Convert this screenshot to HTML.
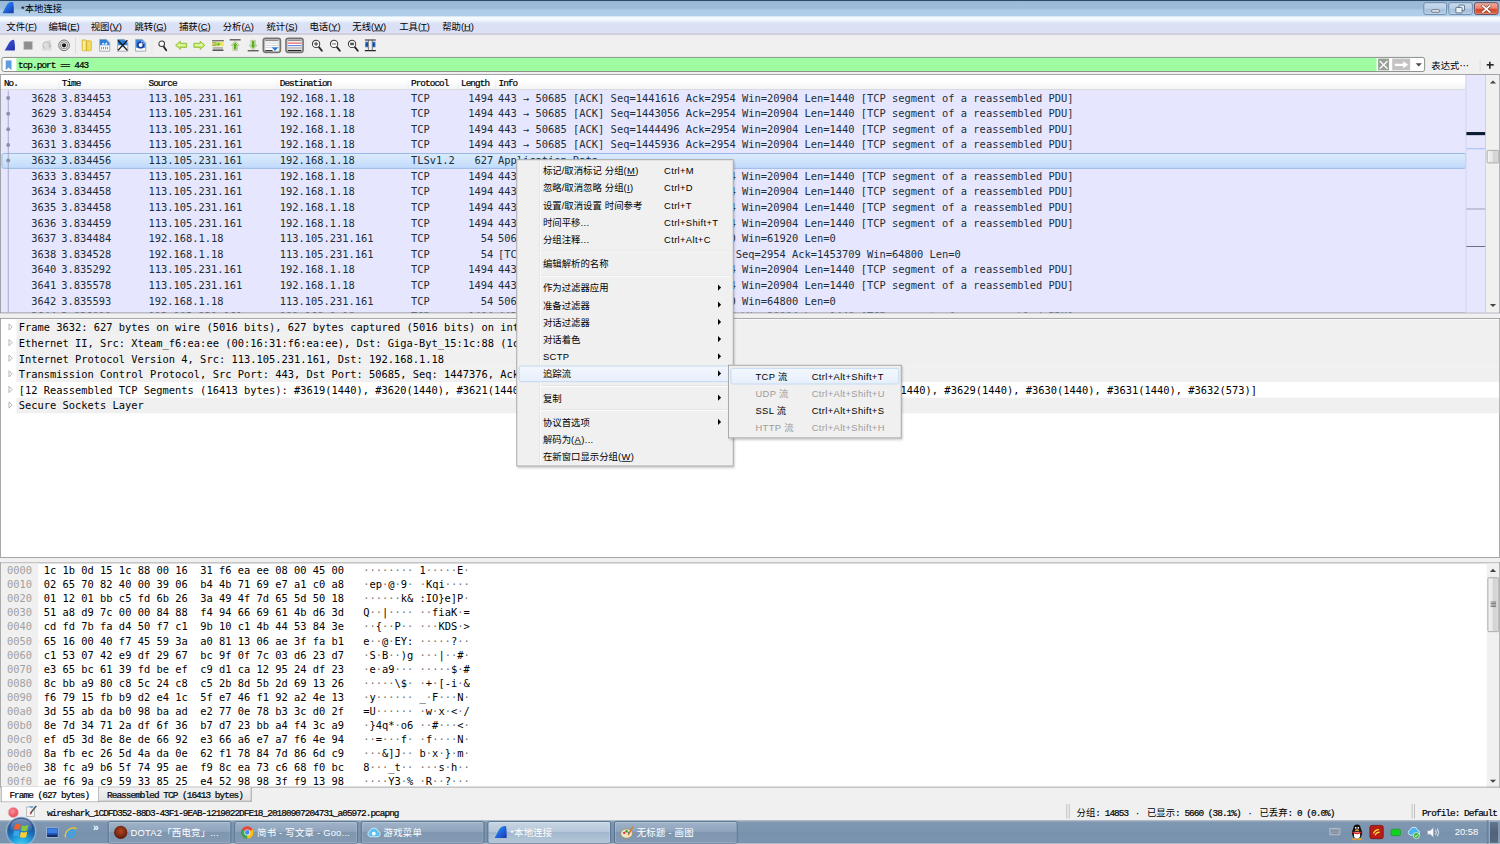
<!DOCTYPE html>
<html lang="zh-CN">
<head>
<meta charset="utf-8">
<title>*本地连接</title>
<style>
html,body{margin:0;padding:0;}
body{width:1500px;height:844px;overflow:hidden;background:#f0f0f0;position:relative;}
#s{position:absolute;left:0;top:0;width:1920px;height:1080px;transform:scale(0.78125);transform-origin:0 0;background:#f0f0f0;overflow:hidden;
 font-family:"Liberation Sans","Noto Sans CJK SC",sans-serif;font-size:12px;color:#000;}
#s *{box-sizing:border-box;}
.abs{position:absolute;}
.mono{font-family:"DejaVu Sans Mono","Liberation Mono",monospace;font-size:13.305px;white-space:pre;}
.sim{font-family:"Liberation Mono","Noto Serif CJK SC",monospace;font-size:12px;letter-spacing:-1.2px;white-space:pre;-webkit-text-stroke:0.25px #000;}
.simc{font-family:"Liberation Mono","Noto Sans CJK SC",sans-serif;font-size:12px;white-space:pre;}
/* title bar */
#title{left:0;top:0;width:1920px;height:22px;background:linear-gradient(#2a4866 0,#2e4e6e 1px,#98b7d6 1.6px,#9cbbd9 4px,#9cbbd9 10.5px,#aecce7 13px,#b0cee9 22px);}
#title .t{left:27px;top:3px;font-size:12px;line-height:17px;color:#000;}
.wb{top:2.5px;height:16px;border:1px solid #5f7c9c;border-radius:3px;background:linear-gradient(#c6d9ed,#bbd1e8 48%,#a6c0dc 52%,#b0c8e2 100%);box-shadow:inset 0 0 0 1px rgba(255,255,255,0.35);}
.cjk{font-family:"Noto Sans CJK SC","Liberation Sans",sans-serif;font-size:12px;white-space:pre;}
#menubar{left:0;top:21.2px;width:1920px;height:23.6px;background:linear-gradient(#f7fbff 0,#f3f8fe 4.5px,#dce2f5 8.5px,#dadff5 17px,#dfe2f6 21.6px,#c9c6d3 22px,#cbc8d4 23px,#e6e6ea 23.6px);}
#menubar span{position:absolute;top:5px;line-height:17px;font-size:12px;white-space:pre;}
#toolbar{left:0;top:44px;width:1920px;height:29px;}
.tsep{position:absolute;top:4px;width:1px;height:21px;background:#d6d6d6;}
.ic{position:absolute;width:16px;height:16px;top:7px;overflow:visible;}
.tog{position:absolute;top:3px;width:24px;height:23px;border:2px solid #747474;border-radius:4px;background:#d6d6d6;box-shadow:inset 0 0 0 1px #b4b4b4;}
/* filter */
#filter{left:2px;top:73px;width:1822px;height:19px;border:1px solid #6a766a;border-radius:3px;background:#fff;overflow:hidden;}
#filter .g{left:17.5px;top:0;width:1741.5px;height:17px;background:#a0fca0;}
/* panes */
.pane{position:absolute;left:0;width:1920px;border:1px solid #8f8f8f;background:#fff;overflow:hidden;}
#plist{top:95px;height:306px;background:#e7e6ff;}
#phead{left:0;top:0;width:1875px;height:19px;background:linear-gradient(#fff 0,#fff 40%,#f3f4f5 100%);border-bottom:1px solid #d5d5d5;}
#phead span{position:absolute;top:5px;line-height:13px;}
.row{position:absolute;left:0;width:1875px;height:20px;line-height:20px;color:#1a2f37;}
.row span{position:absolute;top:0;}
.c1{left:0;width:71px;text-align:right;}
.c2{left:77.5px;}.c3{left:189px;}.c4{left:357px;}.c5{left:525px;}
.c6{left:560px;width:70.5px;text-align:right;}.c7{left:636.5px;}
.sel{left:1px;width:1875px;border:1px solid #84acdd;border-radius:3px;background:linear-gradient(#dcebfc,#c1dbfc);}
#details{top:407px;height:307px;}
.drow{position:absolute;left:20px;width:1900px;height:20px;line-height:20px;background:#f0f0f0;color:#000;}
.drow span{position:absolute;left:3px;top:0.6px;}
.exp{position:absolute;left:7.7px;width:9px;height:9px;}
#hex{top:720px;height:288px;border-bottom:none;}
.hrow{position:absolute;left:0;height:18px;line-height:18px;width:1900px;margin-top:1px;}
.hrow .o{position:absolute;left:8px;color:#a0a0a0;}
.hrow .h{position:absolute;left:55.1px;color:#000;}
.hrow .a{position:absolute;left:464px;color:#000;}
.hrow .a b{font-weight:normal;color:#777;}
/* menus */
.menu{position:absolute;background:#f0f0f0;border:1px solid #979797;box-shadow:2px 2px 3px rgba(0,0,0,0.22);font-size:12px;}
.mi{position:absolute;left:0;height:22px;line-height:23.4px;white-space:pre;}
.mi .k{position:absolute;top:0;letter-spacing:0.45px;}
.mi i{font-style:normal;letter-spacing:0.45px;}
.msep{position:absolute;left:30px;height:2px;border-top:1px solid #e0e0e0;border-bottom:1px solid #fff;}
.marr{position:absolute;width:0;height:0;border-left:4px solid #000;border-top:4px solid transparent;border-bottom:4px solid transparent;}
.hl{position:absolute;border:1px solid #b6d3f3;border-radius:3px;background:linear-gradient(#f3f7fd,#e6effb);}
/* tabs / status */
#tabs{left:0;top:1007px;width:1920px;height:20px;}
#status{left:0;top:1027px;width:1920px;height:23px;background:#f0f0f0;}
.dot{display:inline-block;width:12px;text-align:center;}
/* taskbar */
#taskbar{left:0;top:1050px;width:1920px;height:30px;background:linear-gradient(#8c9eb2 0,#9aacbf 1px,#7f97b1 2.5px,#7b94af 14px,#7891ac 15px,#7a93ae 30px);}
.tb{position:absolute;top:1px;height:29px;width:158px;border:1px solid #506a88;border-radius:3px;background:linear-gradient(#9fb2c8 0,#90a5bd 45%,#7f96b0 50%,#859bb4 100%);box-shadow:inset 0 0 0 1px rgba(255,255,255,0.28);color:#fff;font-size:12px;line-height:27px;white-space:pre;overflow:hidden;}
.tb.act{background:linear-gradient(#c8d6e4 0,#b7c8da 45%,#a2b7cd 50%,#b5c7da 100%);}
.tb span{position:absolute;left:28px;top:1px;letter-spacing:0.3px;}
</style>
</head>
<body>
<div id="s">

<!-- title bar -->
<div class="abs" id="title">
 <svg class="abs" style="left:0;top:0" width="0" height="0"><defs><linearGradient id="fg" x1="0" y1="0" x2="1" y2="1"><stop offset="0" stop-color="#38a0f8"/><stop offset="0.5" stop-color="#1f68e0"/><stop offset="1" stop-color="#1a34a8"/></linearGradient><linearGradient id="fg2" x1="0" y1="0" x2="1" y2="1"><stop offset="0" stop-color="#5a8af0"/><stop offset="0.45" stop-color="#2f48c8"/><stop offset="1" stop-color="#2a2ea0"/></linearGradient></defs></svg>
 <svg class="abs" style="left:3px;top:2px" width="16" height="16" viewBox="0 0 16 16"><path d="M0 14.8 C2 11.6 3.6 8 5 5.4 C6.6 2.6 8.2 1 10.6 0.6 L13.8 0.4 C14.7 5 14.9 10 14.5 14.8 Z" fill="url(#fg)"/></svg>
 <div class="abs t">*本地连接</div>
 <!-- window buttons -->
 <div class="abs wb" style="left:1822px;width:30px"><div class="abs" style="left:9px;top:8px;width:11px;height:4px;border:1px solid #4a5a6c;background:#fff;border-radius:1.5px"></div></div>
 <div class="abs wb" style="left:1854px;width:31px"><div class="abs" style="left:12px;top:2px;width:8px;height:8px;border:1.5px solid #4a5a6c;background:#e8f0f8;border-radius:1px"></div><div class="abs" style="left:8px;top:5px;width:9px;height:8px;border:1.5px solid #4a5a6c;background:#e8f0f8;border-radius:1px"></div></div>
 <div class="abs wb" style="left:1887px;width:31px;border-color:#5a2630;background:linear-gradient(#f4a898,#ee8270 48%,#d6482c 52%,#e0603c 100%)"><svg class="abs" style="left:8px;top:2px" width="13" height="11" viewBox="0 0 13 11"><path d="M2 1.5 L11 9.5 M11 1.5 L2 9.5" stroke="#7a3a30" stroke-width="3.8" stroke-linecap="square"/><path d="M2 1.5 L11 9.5 M11 1.5 L2 9.5" stroke="#fff" stroke-width="2.2" stroke-linecap="square"/></svg></div>
</div>
<!-- menu bar -->
<div class="abs" id="menubar">
 <span style="left:8px">文件(<u>F</u>)</span><span style="left:62px">编辑(<u>E</u>)</span><span style="left:116px">视图(<u>V</u>)</span><span style="left:172px">跳转(<u>G</u>)</span><span style="left:229px">捕获(<u>C</u>)</span><span style="left:285px">分析(<u>A</u>)</span><span style="left:341px">统计(<u>S</u>)</span><span style="left:396px">电话(<u>Y</u>)</span><span style="left:451px">无线(<u>W</u>)</span><span style="left:511px">工具(<u>T</u>)</span><span style="left:566px">帮助(<u>H</u>)</span>
</div>
<!-- toolbar -->
<div class="abs" id="toolbar">
<!--ICONS-->
<svg class="ic" style="left:4.8px;top:6px" width="16" height="16" viewBox="0 0 16 16"><path d="M1 14.5 C3 11.5 4.6 8.4 6 5.8 C7.4 3.2 8.8 1.6 10.8 1.2 L13 1 C14 5.5 14.4 10 14 14.5 Z" fill="url(#fg2)"/></svg>
<svg class="ic" style="left:27.8px;top:6px" width="16" height="16" viewBox="0 0 16 16"><rect x="2.5" y="3" width="11" height="10.5" fill="#8e8e8e" stroke="#c4c4c4" stroke-width="0.8"/></svg>
<svg class="ic" style="left:51.5px;top:6px" width="16" height="16" viewBox="0 0 16 16"><path d="M1 14.5 C3 11.5 4.6 8.4 6 5.8 C7.4 3.2 8.8 1.6 10.8 1.2 L13 1 C14 5.5 14.4 10 14 14.5 Z" fill="#dcdcdc"/><path d="M5 12 A4.5 4.5 0 1 1 12 9" stroke="#c0c0c0" stroke-width="1.5" fill="none"/><path d="M10 7 L14 9 L11 12 Z" fill="#c0c0c0"/></svg>
<svg class="ic" style="left:73.9px;top:6px" width="16" height="16" viewBox="0 0 16 16"><circle cx="8" cy="8" r="6.8" fill="#f6f6f6" stroke="#4a4a4a" stroke-width="1"/><circle cx="8" cy="8" r="4.6" fill="none" stroke="#5a5a5a" stroke-width="0.9"/><circle cx="8" cy="8" r="2.7" fill="#1a1a1a"/></svg>
<div class="tsep" style="left:96px"></div>
<svg class="ic" style="left:102.7px;top:6px" width="16" height="16" viewBox="0 0 16 16"><path d="M2 2.2 Q2 1 3.2 1 H6.5 Q7.5 1 7.8 2.2 H13 Q14 2.2 14 3.4 V13.6 Q14 15 12.6 15 H3.4 Q2 15 2 13.6 Z" fill="#e8c838" stroke="#d4b02c" stroke-width="0.8"/><path d="M3 2 H7 V14.4 H3.6 Q3 14.4 3 13.6 Z" fill="#f8eea0"/><path d="M8.6 3 H13.2 V13.8 Q13.2 14.4 12.4 14.4 H8.6 Z" fill="#f2dc60"/><path d="M7.4 2.5 V14.6" stroke="#c8a428" stroke-width="1"/></svg>
<svg class="ic" style="left:126.0px;top:6px" width="16" height="16" viewBox="0 0 16 16"><path d="M1.5 0.5 H10.5 L14.5 4.5 V15.5 H1.5 Z" fill="#fafafa" stroke="#8a9ab0" stroke-width="1"/><path d="M2 1 H10 L14 5 V8 H2 Z" fill="#2f7fd8"/><path d="M4 7 L6 4.5 L8 6.5 L10 4 L12 7 Z" fill="#fff"/><path d="M4 10 V13 M6.5 10 V13 M9 10 V13 M11.5 10 V13" stroke="#8a8a8a" stroke-width="1.2"/></svg>
<svg class="ic" style="left:148.8px;top:6px" width="16" height="16" viewBox="0 0 16 16"><path d="M1.5 0.5 H10.5 L14.5 4.5 V15.5 H1.5 Z" fill="#fafafa" stroke="#8a9ab0" stroke-width="1"/><path d="M2 1 H10 L14 5 V8 H2 Z" fill="#2f7fd8"/><path d="M2 1.5 L14 14.5 M14 1.5 L2 14.5" stroke="#1a1a1a" stroke-width="1.8"/></svg>
<svg class="ic" style="left:171.8px;top:6px" width="16" height="16" viewBox="0 0 16 16"><path d="M1.5 0.5 H10.5 L14.5 4.5 V15.5 H1.5 Z" fill="#fafafa" stroke="#8a9ab0" stroke-width="1"/><path d="M2 1 H10 L14 5 V11 H2 Z" fill="#3a8ae0"/><circle cx="8" cy="7.5" r="3.6" fill="#fff" stroke="#1c3c9c" stroke-width="2.2"/><path d="M9 2.2 L13.4 4.6 L9.4 7 Z" fill="#fff"/><path d="M9.6 3 L12.4 4.6 L9.8 6.2 Z" fill="#1c3c9c"/></svg>
<div class="tsep" style="left:194px;background:#e6e6e6"></div>
<svg class="ic" style="left:200.3px;top:6px" width="16" height="16" viewBox="0 0 16 16"><path d="M9.4 9.4 L12.8 14.4" stroke="#2a2a2a" stroke-width="2.4" stroke-linecap="round"/><circle cx="7" cy="6" r="3.6" fill="#fbfbfb" stroke="#3a3a3a" stroke-width="1.3"/></svg>
<svg class="ic" style="left:224.0px;top:6px" width="16" height="16" viewBox="0 0 16 16"><path d="M0.8 8 L6.8 2.8 V5.4 H14.8 V10.6 H6.8 V13.2 Z" fill="#c4ea5c" stroke="#7eb62a" stroke-width="1"/><path d="M3 8 L6.4 5.2 V6.8 H13.6 V8.4 H3.4 Z" fill="#ecfac0"/></svg>
<svg class="ic" style="left:246.7px;top:6px" width="16" height="16" viewBox="0 0 16 16"><g transform="translate(16,0) scale(-1,1)"><path d="M0.8 8 L6.8 2.8 V5.4 H14.8 V10.6 H6.8 V13.2 Z" fill="#c4ea5c" stroke="#7eb62a" stroke-width="1"/><path d="M3 8 L6.4 5.2 V6.8 H13.6 V8.4 H3.4 Z" fill="#ecfac0"/></g></svg>
<svg class="ic" style="left:270.6px;top:6px" width="16" height="16" viewBox="0 0 16 16"><path d="M0.5 2.2 H15.5" stroke="#444" stroke-width="1.3"/><rect x="0.5" y="3.6" width="15" height="5.6" fill="#f2e660"/><path d="M0.5 4.6 H6 M0.5 8.2 H6" stroke="#7a8a3a" stroke-width="0.9"/><path d="M1.5 5.6 H7.4 V3.6 L11.6 6.4 L7.4 9.4 V7.4 H1.5 Z" fill="#62b41c" stroke="#cfe8a8" stroke-width="0.6"/><path d="M1.5 11.4 H14.5" stroke="#777" stroke-width="1.2"/><path d="M1 14.2 H15" stroke="#222" stroke-width="1.5"/></svg>
<svg class="ic" style="left:293.2px;top:6px" width="16" height="16" viewBox="0 0 16 16"><path d="M1 1 H15" stroke="#333" stroke-width="1.4"/><path d="M8 2.4 L13 8 H10.8 V14.4 H5.2 V8 H3 Z" fill="#eef4e2" stroke="#a8bc88" stroke-width="1"/><path d="M8 4 L11 7.8 H9.6 V13.4 H6.4 V7.8 H5 Z" fill="#5cb01c"/></svg>
<svg class="ic" style="left:315.8px;top:6px" width="16" height="16" viewBox="0 0 16 16"><g transform="translate(0,16) scale(1,-1)"><path d="M1 1 H15" stroke="#333" stroke-width="1.4"/><path d="M8 2.4 L13 8 H10.8 V14.4 H5.2 V8 H3 Z" fill="#eef4e2" stroke="#a8bc88" stroke-width="1"/><path d="M8 4 L11 7.8 H9.6 V13.4 H6.4 V7.8 H5 Z" fill="#5cb01c"/></g></svg>
<div class="tog" style="left:335.5px;top:4px;width:24px;height:20px"></div>
<svg class="ic" style="left:339.5px;top:6px" width="16" height="16" viewBox="0 0 16 16"><rect x="-0.5" y="0.5" width="17" height="15" fill="#fff"/><path d="M-0.5 1.6 H16.5" stroke="#8e8e8e" stroke-width="2.2"/><path d="M-0.5 5.2 H16.5 M-0.5 8.2 H16.5" stroke="#c0c6cc" stroke-width="1"/><path d="M-0.5 11 H8" stroke="#c0c6cc" stroke-width="1"/><path d="M-0.5 14.8 H9" stroke="#333" stroke-width="1.5"/><path d="M7.6 10.6 H16.4 L12 15.4 Z" fill="#2a7ad4"/></svg>
<div class="tog" style="left:364.5px;top:4px;width:24px;height:20px"></div>
<svg class="ic" style="left:368.5px;top:6px" width="16" height="16" viewBox="0 0 16 16"><rect x="-0.5" y="0.5" width="17" height="15" fill="#fff"/><path d="M-0.5 1.6 H16.5" stroke="#8e8e8e" stroke-width="2.2"/><path d="M-0.5 5.2 H16.5" stroke="#e8484c" stroke-width="1.4"/><path d="M-0.5 8.4 H16.5" stroke="#4a78d8" stroke-width="1.3"/><path d="M-0.5 11.4 H16.5" stroke="#8e8e8e" stroke-width="1.3"/><path d="M-0.5 14.6 H16.5" stroke="#222" stroke-width="1.6"/></svg>
<div class="tsep" style="left:391px;background:#e6e6e6"></div>
<svg class="ic" style="left:397.5px;top:6px" width="16" height="16" viewBox="0 0 16 16"><path d="M10 10 L14 15" stroke="#2a2a2a" stroke-width="2.4" stroke-linecap="round"/><circle cx="6.6" cy="6.2" r="4.7" fill="#fbfbfb" stroke="#3a3a3a" stroke-width="1.3"/><path d="M4 6.2 H9.2 M6.6 3.6 V8.8" stroke="#2a2a2a" stroke-width="1.2"/></svg>
<svg class="ic" style="left:420.5px;top:6px" width="16" height="16" viewBox="0 0 16 16"><path d="M10 10 L14 15" stroke="#2a2a2a" stroke-width="2.4" stroke-linecap="round"/><circle cx="6.6" cy="6.2" r="4.7" fill="#fbfbfb" stroke="#3a3a3a" stroke-width="1.3"/><path d="M4 6.2 H9.2" stroke="#777" stroke-width="1.4"/></svg>
<svg class="ic" style="left:443.5px;top:6px" width="16" height="16" viewBox="0 0 16 16"><path d="M10 10 L14 15" stroke="#2a2a2a" stroke-width="2.4" stroke-linecap="round"/><circle cx="6.6" cy="6.2" r="4.7" fill="#fbfbfb" stroke="#3a3a3a" stroke-width="1.3"/><rect x="4.2" y="4.6" width="4.8" height="3.2" fill="#555"/></svg>
<svg class="ic" style="left:466.0px;top:6px" width="16" height="16" viewBox="0 0 16 16"><path d="M1 1.2 H15 M1 14.8 H15" stroke="#222" stroke-width="1.5"/><path d="M5.5 1 V15 M10.5 1 V15" stroke="#555" stroke-width="1"/><path d="M1.5 3.4 H5 V10.6 H1.5 Z M10.8 3.4 H14.5 V10.6 H10.8 Z" fill="#2a6cc8"/><path d="M2 7 L4.6 4.6 V9.4 Z M14 7 L11.4 4.6 V9.4 Z" fill="#123c88"/></svg>
</div>
<!-- filter -->
<div class="abs" id="filter">
 <svg class="abs" style="left:3.5px;top:2.5px" width="8" height="13" viewBox="0 0 8 13"><path d="M0 0 H8 V13 L4 9.5 L0 13 Z" fill="#5f9be0"/></svg>
 <div class="abs g"></div>
 <div class="abs sim" style="left:20px;top:4px;line-height:13px;color:#000">tcp.port == 443</div>
 <div class="abs" style="left:1761px;top:1px;width:14px;height:15px;background:#979f97"><svg class="abs" style="left:1px;top:1.5px" width="12" height="12" viewBox="0 0 12 12"><path d="M1 1 L11 11 M11 1 L1 11" stroke="#fff" stroke-width="1.6"/></svg></div>
 <div class="abs" style="left:1779px;top:1px;width:23px;height:15px;background:#c3c3c3"><svg class="abs" style="left:3px;top:2.5px" width="18" height="10" viewBox="0 0 18 10"><path d="M0 3.5 H11 V0.5 L17.5 5 L11 9.5 V6.5 H0 Z" fill="#fff"/></svg></div>
 <div class="abs" style="left:1809px;top:7px;width:0;height:0;border-top:4px solid #4a4a4a;border-left:4px solid transparent;border-right:4px solid transparent"></div>
</div>
<div class="abs cjk" style="left:1832px;top:75px;line-height:16px;">表达式…</div>
<div class="abs" style="left:1894px;top:76px;width:1px;height:15px;background:#d8d8d8"></div>
<div class="abs" style="left:1902.5px;top:78.5px;width:9px;height:9px"><div class="abs" style="left:0;top:3.5px;width:9px;height:2px;background:#222"></div><div class="abs" style="left:3.5px;top:0;width:2px;height:9px;background:#222"></div></div>

<div class="pane" id="plist">
<div class="abs sim" id="phead"><span style="left:4px">No.</span><span style="left:78px">Time</span><span style="left:189px">Source</span><span style="left:357px">Destination</span><span style="left:525px">Protocol</span><span style="left:589px">Length</span><span style="left:637px">Info</span></div>
<div class="row mono" style="top:19.5px"><span class="c1">3628</span><span class="c2">3.834453</span><span class="c3">113.105.231.161</span><span class="c4">192.168.1.18</span><span class="c5">TCP</span><span class="c6">1494</span><span class="c7">443 → 50685 [ACK] Seq=1441616 Ack=2954 Win=20904 Len=1440 [TCP segment of a reassembled PDU]</span></div>
<div class="row mono" style="top:39.5px"><span class="c1">3629</span><span class="c2">3.834454</span><span class="c3">113.105.231.161</span><span class="c4">192.168.1.18</span><span class="c5">TCP</span><span class="c6">1494</span><span class="c7">443 → 50685 [ACK] Seq=1443056 Ack=2954 Win=20904 Len=1440 [TCP segment of a reassembled PDU]</span></div>
<div class="row mono" style="top:59.5px"><span class="c1">3630</span><span class="c2">3.834455</span><span class="c3">113.105.231.161</span><span class="c4">192.168.1.18</span><span class="c5">TCP</span><span class="c6">1494</span><span class="c7">443 → 50685 [ACK] Seq=1444496 Ack=2954 Win=20904 Len=1440 [TCP segment of a reassembled PDU]</span></div>
<div class="row mono" style="top:79.5px"><span class="c1">3631</span><span class="c2">3.834456</span><span class="c3">113.105.231.161</span><span class="c4">192.168.1.18</span><span class="c5">TCP</span><span class="c6">1494</span><span class="c7">443 → 50685 [ACK] Seq=1445936 Ack=2954 Win=20904 Len=1440 [TCP segment of a reassembled PDU]</span></div>
<div class="row sel abs" style="top:99.5px;height:20px"></div>
<div class="row mono" style="top:99.5px"><span class="c1">3632</span><span class="c2">3.834456</span><span class="c3">113.105.231.161</span><span class="c4">192.168.1.18</span><span class="c5">TLSv1.2</span><span class="c6">627</span><span class="c7">Application Data</span></div>
<div class="row mono" style="top:119.5px"><span class="c1">3633</span><span class="c2">3.834457</span><span class="c3">113.105.231.161</span><span class="c4">192.168.1.18</span><span class="c5">TCP</span><span class="c6">1494</span><span class="c7">443 → 50685 [ACK] Seq=1447376 Ack=2954 Win=20904 Len=1440 [TCP segment of a reassembled PDU]</span></div>
<div class="row mono" style="top:139.5px"><span class="c1">3634</span><span class="c2">3.834458</span><span class="c3">113.105.231.161</span><span class="c4">192.168.1.18</span><span class="c5">TCP</span><span class="c6">1494</span><span class="c7">443 → 50685 [ACK] Seq=1448816 Ack=2954 Win=20904 Len=1440 [TCP segment of a reassembled PDU]</span></div>
<div class="row mono" style="top:159.5px"><span class="c1">3635</span><span class="c2">3.834458</span><span class="c3">113.105.231.161</span><span class="c4">192.168.1.18</span><span class="c5">TCP</span><span class="c6">1494</span><span class="c7">443 → 50685 [ACK] Seq=1450256 Ack=2954 Win=20904 Len=1440 [TCP segment of a reassembled PDU]</span></div>
<div class="row mono" style="top:179.5px"><span class="c1">3636</span><span class="c2">3.834459</span><span class="c3">113.105.231.161</span><span class="c4">192.168.1.18</span><span class="c5">TCP</span><span class="c6">1494</span><span class="c7">443 → 50685 [ACK] Seq=1451696 Ack=2954 Win=20904 Len=1440 [TCP segment of a reassembled PDU]</span></div>
<div class="row mono" style="top:199.5px"><span class="c1">3637</span><span class="c2">3.834484</span><span class="c3">192.168.1.18</span><span class="c4">113.105.231.161</span><span class="c5">TCP</span><span class="c6">54</span><span class="c7">50685 → 443 [ACK] Seq=2954 Ack=1450250 Win=61920 Len=0</span></div>
<div class="row mono" style="top:219.5px"><span class="c1">3638</span><span class="c2">3.834528</span><span class="c3">192.168.1.18</span><span class="c4">113.105.231.161</span><span class="c5">TCP</span><span class="c6">54</span><span class="c7">[TCP Window Update] 50685 → 443 [ACK] Seq=2954 Ack=1453709 Win=64800 Len=0</span></div>
<div class="row mono" style="top:239.5px"><span class="c1">3640</span><span class="c2">3.835292</span><span class="c3">113.105.231.161</span><span class="c4">192.168.1.18</span><span class="c5">TCP</span><span class="c6">1494</span><span class="c7">443 → 50685 [ACK] Seq=1453709 Ack=2954 Win=20904 Len=1440 [TCP segment of a reassembled PDU]</span></div>
<div class="row mono" style="top:259.5px"><span class="c1">3641</span><span class="c2">3.835578</span><span class="c3">113.105.231.161</span><span class="c4">192.168.1.18</span><span class="c5">TCP</span><span class="c6">1494</span><span class="c7">443 → 50685 [ACK] Seq=1455149 Ack=2954 Win=20904 Len=1440 [TCP segment of a reassembled PDU]</span></div>
<div class="row mono" style="top:279.5px"><span class="c1">3642</span><span class="c2">3.835593</span><span class="c3">192.168.1.18</span><span class="c4">113.105.231.161</span><span class="c5">TCP</span><span class="c6">54</span><span class="c7">50685 → 443 [ACK] Seq=2954 Ack=1456580 Win=64800 Len=0</span></div>
<div class="row mono" style="top:299.5px"><span class="c1">3644</span><span class="c2">3.836010</span><span class="c3">113.105.231.161</span><span class="c4">192.168.1.18</span><span class="c5">TCP</span><span class="c6">1494</span><span class="c7">443 → 50685 [ACK] Seq=1456589 Ack=2954 Win=20904 Len=1440 [TCP segment of a reassembled PDU]</span></div>
<div class="abs" style="left:9px;top:20px;width:1px;height:290px;background:#9a9ab4"></div>
<div class="abs" style="left:7px;top:27.0px;width:5px;height:5px;border-radius:3px;background:#8e8ea8"></div>
<div class="abs" style="left:7px;top:47.0px;width:5px;height:5px;border-radius:3px;background:#8e8ea8"></div>
<div class="abs" style="left:7px;top:67.0px;width:5px;height:5px;border-radius:3px;background:#8e8ea8"></div>
<div class="abs" style="left:7px;top:87.0px;width:5px;height:5px;border-radius:3px;background:#8e8ea8"></div>
<div class="abs" style="left:7px;top:107.0px;width:5px;height:5px;border-radius:3px;background:#8e8ea8"></div>
<div class="abs" style="left:74px;top:0;width:1px;height:19px;background:linear-gradient(#fff,#e2e3e6)"></div>
<div class="abs" style="left:185px;top:0;width:1px;height:19px;background:linear-gradient(#fff,#e2e3e6)"></div>
<div class="abs" style="left:353px;top:0;width:1px;height:19px;background:linear-gradient(#fff,#e2e3e6)"></div>
<div class="abs" style="left:521px;top:0;width:1px;height:19px;background:linear-gradient(#fff,#e2e3e6)"></div>
<div class="abs" style="left:585px;top:0;width:1px;height:19px;background:linear-gradient(#fff,#e2e3e6)"></div>
<div class="abs" style="left:633px;top:0;width:1px;height:19px;background:linear-gradient(#fff,#e2e3e6)"></div>
<!-- minimap -->
<div class="abs" style="left:1875px;top:0;width:26px;height:306px;background:#e7e6ff;border-left:1px solid #cfcfe6;border-right:1px solid #c8c8d8"></div>
<div class="abs" style="left:1876px;top:73px;width:24px;height:4px;background:#0d1b33"></div>
<div class="abs" style="left:1876px;top:94px;width:24px;height:1px;background:#8ab4f0"></div>
<div class="abs" style="left:1876px;top:171px;width:24px;height:1px;background:#8d8da6"></div>
<div class="abs" style="left:1876px;top:219px;width:24px;height:1px;background:#4c4c66"></div>
<!-- scrollbar -->
<div class="abs" style="left:1901px;top:0;width:18px;height:306px;background:#f0f0f0"></div>
<div class="abs" style="left:1906px;top:7px;width:0;height:0;border-bottom:4px solid #444;border-left:4px solid transparent;border-right:4px solid transparent"></div>
<div class="abs" style="left:1906px;top:293px;width:0;height:0;border-top:4px solid #444;border-left:4px solid transparent;border-right:4px solid transparent"></div>
<div class="abs" style="left:1902px;top:96px;width:16px;height:17px;border:1px solid #979797;border-radius:2px;background:linear-gradient(90deg,#f4f4f4,#e4e4e4 50%,#d2d2d2 51%,#dadada)"></div>

</div>
<div class="pane" id="details">
<div class="drow mono" style="top:1.3px;background:#f0f0f0"><span>Frame 3632: 627 bytes on wire (5016 bits), 627 bytes captured (5016 bits) on interface 0</span></div>
<svg class="exp" style="top:6.3px" viewBox="0 0 9 9"><path d="M2.5 0.5 L6.5 4.5 L2.5 8.5 Z" fill="#fff" stroke="#a0a0a0" stroke-width="1"/></svg>
<div class="drow mono" style="top:21.3px;background:#f0f0f0"><span>Ethernet II, Src: Xteam_f6:ea:ee (00:16:31:f6:ea:ee), Dst: Giga-Byt_15:1c:88 (1c:1b:0d:15:1c:88)</span></div>
<svg class="exp" style="top:26.3px" viewBox="0 0 9 9"><path d="M2.5 0.5 L6.5 4.5 L2.5 8.5 Z" fill="#fff" stroke="#a0a0a0" stroke-width="1"/></svg>
<div class="drow mono" style="top:41.3px;background:#f0f0f0"><span>Internet Protocol Version 4, Src: 113.105.231.161, Dst: 192.168.1.18</span></div>
<svg class="exp" style="top:46.3px" viewBox="0 0 9 9"><path d="M2.5 0.5 L6.5 4.5 L2.5 8.5 Z" fill="#fff" stroke="#a0a0a0" stroke-width="1"/></svg>
<div class="drow mono" style="top:61.3px;background:#f0f0f0"><span>Transmission Control Protocol, Src Port: 443, Dst Port: 50685, Seq: 1447376, Ack: 2954, Len: 573</span></div>
<svg class="exp" style="top:66.3px" viewBox="0 0 9 9"><path d="M2.5 0.5 L6.5 4.5 L2.5 8.5 Z" fill="#fff" stroke="#a0a0a0" stroke-width="1"/></svg>
<div class="drow mono" style="top:81.3px;background:#fff"><span>[12 Reassembled TCP Segments (16413 bytes): #3619(1440), #3620(1440), #3621(1440), #3622(1440), #3623(1440), #3624(1440), #3625(1440), #3628(1440), #3629(1440), #3630(1440), #3631(1440), #3632(573)]</span></div>
<svg class="exp" style="top:86.3px" viewBox="0 0 9 9"><path d="M2.5 0.5 L6.5 4.5 L2.5 8.5 Z" fill="#fff" stroke="#a0a0a0" stroke-width="1"/></svg>
<div class="drow mono" style="top:101.3px;background:#f0f0f0"><span>Secure Sockets Layer</span></div>
<svg class="exp" style="top:106.3px" viewBox="0 0 9 9"><path d="M2.5 0.5 L6.5 4.5 L2.5 8.5 Z" fill="#fff" stroke="#a0a0a0" stroke-width="1"/></svg>
</div>
<div class="pane" id="hex">
<div class="abs" style="left:0;top:0;width:48px;height:290px;background:#f0f0f0"></div>
<div class="hrow mono" style="top:0px"><span class="o">0000</span><span class="h">1c 1b 0d 15 1c 88 00 16  31 f6 ea ee 08 00 45 00</span><span class="a"><b>········</b> 1<b>·····</b>E<b>·</b></span></div>
<div class="hrow mono" style="top:18px"><span class="o">0010</span><span class="h">02 65 70 82 40 00 39 06  b4 4b 71 69 e7 a1 c0 a8</span><span class="a"><b>·</b>ep<b>·</b>@<b>·</b>9<b>·</b> <b>·</b>Kqi<b>····</b></span></div>
<div class="hrow mono" style="top:36px"><span class="o">0020</span><span class="h">01 12 01 bb c5 fd 6b 26  3a 49 4f 7d 65 5d 50 18</span><span class="a"><b>······</b>k&amp; :IO}e]P<b>·</b></span></div>
<div class="hrow mono" style="top:54px"><span class="o">0030</span><span class="h">51 a8 d9 7c 00 00 84 88  f4 94 66 69 61 4b d6 3d</span><span class="a">Q<b>··</b>|<b>····</b> <b>··</b>fiaK<b>·</b>=</span></div>
<div class="hrow mono" style="top:72px"><span class="o">0040</span><span class="h">cd fd 7b fa d4 50 f7 c1  9b 10 c1 4b 44 53 84 3e</span><span class="a"><b>··</b>{<b>··</b>P<b>··</b> <b>···</b>KDS<b>·</b>&gt;</span></div>
<div class="hrow mono" style="top:90px"><span class="o">0050</span><span class="h">65 16 00 40 f7 45 59 3a  a0 81 13 06 ae 3f fa b1</span><span class="a">e<b>··</b>@<b>·</b>EY: <b>·····</b>?<b>··</b></span></div>
<div class="hrow mono" style="top:108px"><span class="o">0060</span><span class="h">c1 53 07 42 e9 df 29 67  bc 9f 0f 7c 03 d6 23 d7</span><span class="a"><b>·</b>S<b>·</b>B<b>··</b>)g <b>···</b>|<b>··</b>#<b>·</b></span></div>
<div class="hrow mono" style="top:126px"><span class="o">0070</span><span class="h">e3 65 bc 61 39 fd be ef  c9 d1 ca 12 95 24 df 23</span><span class="a"><b>·</b>e<b>·</b>a9<b>···</b> <b>·····</b>$<b>·</b>#</span></div>
<div class="hrow mono" style="top:144px"><span class="o">0080</span><span class="h">8c bb a9 80 c8 5c 24 c8  c5 2b 8d 5b 2d 69 13 26</span><span class="a"><b>·····</b>\$<b>·</b> <b>·</b>+<b>·</b>[-i<b>·</b>&amp;</span></div>
<div class="hrow mono" style="top:162px"><span class="o">0090</span><span class="h">f6 79 15 fb b9 d2 e4 1c  5f e7 46 f1 92 a2 4e 13</span><span class="a"><b>·</b>y<b>······</b> _<b>·</b>F<b>···</b>N<b>·</b></span></div>
<div class="hrow mono" style="top:180px"><span class="o">00a0</span><span class="h">3d 55 ab da b0 98 ba ad  e2 77 0e 78 b3 3c d0 2f</span><span class="a">=U<b>······</b> <b>·</b>w<b>·</b>x<b>·</b>&lt;<b>·</b>/</span></div>
<div class="hrow mono" style="top:198px"><span class="o">00b0</span><span class="h">8e 7d 34 71 2a df 6f 36  b7 d7 23 bb a4 f4 3c a9</span><span class="a"><b>·</b>}4q*<b>·</b>o6 <b>··</b>#<b>···</b>&lt;<b>·</b></span></div>
<div class="hrow mono" style="top:216px"><span class="o">00c0</span><span class="h">ef d5 3d 8e 8e de 66 92  e3 66 a6 e7 a7 f6 4e 94</span><span class="a"><b>··</b>=<b>···</b>f<b>·</b> <b>·</b>f<b>····</b>N<b>·</b></span></div>
<div class="hrow mono" style="top:234px"><span class="o">00d0</span><span class="h">8a fb ec 26 5d 4a da 0e  62 f1 78 84 7d 86 6d c9</span><span class="a"><b>···</b>&amp;]J<b>··</b> b<b>·</b>x<b>·</b>}<b>·</b>m<b>·</b></span></div>
<div class="hrow mono" style="top:252px"><span class="o">00e0</span><span class="h">38 fc a9 b6 5f 74 95 ae  f9 8c ea 73 c6 68 f0 bc</span><span class="a">8<b>···</b>_t<b>··</b> <b>···</b>s<b>·</b>h<b>··</b></span></div>
<div class="hrow mono" style="top:270px"><span class="o">00f0</span><span class="h">ae f6 9a c9 59 33 85 25  e4 52 98 98 3f f9 13 98</span><span class="a"><b>····</b>Y3<b>·</b>% <b>·</b>R<b>··</b>?<b>···</b></span></div>
<div class="abs" style="left:1902px;top:0;width:17px;height:288px;background:#f0f0f0"></div>
<div class="abs" style="left:1906px;top:7px;width:0;height:0;border-bottom:4px solid #444;border-left:4px solid transparent;border-right:4px solid transparent"></div>
<div class="abs" style="left:1906px;top:277px;width:0;height:0;border-top:4px solid #444;border-left:4px solid transparent;border-right:4px solid transparent"></div>
<div class="abs" style="left:1903px;top:18px;width:15px;height:70px;border:1px solid #979797;border-radius:2px;background:linear-gradient(90deg,#f4f4f4,#e4e4e4 50%,#d2d2d2 51%,#dadada)">
 <div class="abs" style="left:3px;top:30px;width:7px;height:1px;background:#666;box-shadow:0 2px 0 #666,0 4px 0 #666,0 6px 0 #666"></div>
</div>

</div>
<!-- tabs -->
<div class="abs" id="tabs">
 <div class="abs" style="left:0;top:0;width:1920px;height:1px;background:#8f8f8f"></div>
 <div class="abs sim" style="left:1px;top:0;width:126px;height:20px;background:#fff;border:1px solid #8f8f8f;border-top:none;line-height:24px;padding-left:10px">Frame (627 bytes)</div>
 <div class="abs sim" style="left:127px;top:1px;width:195px;height:18px;background:linear-gradient(#f2f2f2,#e4e4e4);border:1px solid #8f8f8f;border-top:none;border-left:none;line-height:22px;padding-left:10px">Reassembled TCP (16413 bytes)</div>
</div>
<!-- status -->
<div class="abs" id="status">
 <div class="abs" style="left:9.5px;top:5.5px;width:14px;height:14px;border-radius:7px;background:radial-gradient(circle at 42% 38%,#f8909a,#ee5462 60%,#dc3c4c);border:1px solid #e4a0a8"></div>
 <svg class="abs" style="left:33px;top:3px" width="16" height="16" viewBox="0 0 16 16"><rect x="1" y="3" width="10" height="12" fill="#f4f4f4" stroke="#b0b0b0"/><path d="M3 2 L10 2 L8 5 Z" fill="#5ab0e8"/><path d="M13.5 1.5 L6 11" stroke="#555" stroke-width="2"/><path d="M6.5 10 L5 13 L8 11.5Z" fill="#d33"/></svg>
 <div class="abs sim" style="left:60px;top:8px;line-height:14px">wireshark_1CDFD352-88D3-43F1-9EAB-1219022DFE18_20180907204731_a05972.pcapng</div>
 <div class="abs" style="left:1365px;top:2px;width:1px;height:19px;background:#b4b4b4;box-shadow:3px 0 0 #b4b4b4"></div>
 <div class="abs simc" style="left:1378px;top:6px;line-height:16px"><span>分组</span><span class="sim">: 14853 </span><span class="dot">·</span><span class="sim"> </span>已显示<span class="sim">: 5660 (38.1%) </span><span class="dot">·</span><span class="sim"> </span>已丢弃<span class="sim">: 0 (0.0%)</span></div>
 <div class="abs" style="left:1807px;top:2px;width:1px;height:19px;background:#b4b4b4;box-shadow:3px 0 0 #b4b4b4"></div>
 <div class="abs sim" style="left:1820px;top:8px;line-height:14px">Profile: Default</div>
</div>
<!-- taskbar -->
<div class="abs" id="taskbar">
 <div class="abs tb" style="left:138px"><div class="abs" style="left:7px;top:5px;width:17px;height:17px;border-radius:9px;background:radial-gradient(circle at 50% 40%,#b8441c,#5a1c10 75%,#2a0c08)"></div><span>DOTA2「西电竞」...</span></div>
 <div class="abs tb" style="left:300px"><svg class="abs" style="left:7px;top:5px" width="17" height="17" viewBox="0 0 17 17"><circle cx="8.5" cy="8.5" r="8" fill="#e8453c"/><path d="M8.5 8.5 L1.6 4.5 A8 8 0 0 0 8.5 16.5 Z" fill="#34a853"/><path d="M8.5 8.5 L8.5 16.5 A8 8 0 0 0 15.4 4.5 Z" fill="#fbc116"/><circle cx="8.5" cy="8.5" r="3.8" fill="#fff"/><circle cx="8.5" cy="8.5" r="3" fill="#4a8af4"/></svg><span>简书 - 写文章 - Goo...</span></div>
 <div class="abs tb" style="left:462px"><svg class="abs" style="left:6px;top:6px" width="19" height="15" viewBox="0 0 19 15"><path d="M4.5 13 A4 4 0 0 1 4.5 5.5 A5.5 5.5 0 0 1 15 6 A3.6 3.6 0 0 1 15 13 Z" fill="#5cc0f0" stroke="#e8f6ff" stroke-width="1"/><circle cx="9.5" cy="9" r="2.4" fill="#fff"/></svg><span>游戏菜单</span></div>
 <div class="abs tb act" style="left:624px"><svg class="abs" style="left:8px;top:5px" width="17" height="17" viewBox="0 0 16 16"><path d="M0 14.8 C2 11.6 3.6 8 5 5.4 C6.6 2.6 8.2 1 10.6 0.6 L13.8 0.4 C14.7 5 14.9 10 14.5 14.8 Z" fill="url(#fg)"/></svg><span>*本地连接</span></div>
 <div class="abs tb" style="left:786px"><svg class="abs" style="left:7px;top:5px" width="18" height="17" viewBox="0 0 18 17"><ellipse cx="8" cy="10" rx="7.5" ry="6" fill="#f0e6c8" stroke="#a08850"/><circle cx="5" cy="9" r="1.5" fill="#e03030"/><circle cx="8" cy="7" r="1.5" fill="#30a030"/><circle cx="11" cy="9" r="1.5" fill="#3050e0"/><path d="M10 12 L16 1" stroke="#d08020" stroke-width="2"/></svg><span>无标题 - 画图</span></div>
 <!-- start orb -->
 <div class="abs" style="left:9px;top:-4.5px;width:36px;height:36px;border-radius:18px;background:radial-gradient(circle at 50% 105%,#48dcfa 0,#22a4e0 28%,#1a6cb8 52%,#1c4a8c 74%,#1a3668 100%);box-shadow:0 0 2px 1px rgba(170,215,245,0.75),inset 0 1px 2px rgba(255,255,255,0.5)">
  <div class="abs" style="left:4px;top:2px;width:28px;height:16px;border-radius:14px 14px 10px 10px/12px 12px 5px 5px;background:linear-gradient(rgba(255,255,255,0.45),rgba(255,255,255,0.05))"></div>
  <svg class="abs" style="left:8px;top:6.5px" width="20" height="22" viewBox="0 0 20 22"><path d="M2.2 3.2 Q6 1.2 9.6 3.4 L8.4 10.4 Q4.8 8.4 0.8 10.2 Z" fill="#f0602c"/><path d="M11 4.2 Q14.6 6.4 19.4 3.8 L18 10.8 Q14 13 9.8 11 Z" fill="#86c83c"/><path d="M0.6 11.8 Q4.6 10 8.2 12 L7 19 Q3.4 17 -0.4 18.8 Z" fill="#38a4ec"/><path d="M9.6 12.6 Q13.4 14.6 17.8 12.4 L16.6 19.2 Q12.4 21.4 8.4 19.4 Z" fill="#fcd02c"/></svg>
 </div>
 <!-- quick launch -->
 <svg class="abs" style="left:59px;top:9px" width="16" height="14" viewBox="0 0 16 14"><rect x="0.5" y="0.5" width="15" height="12.5" fill="#1c4cae" stroke="#b8cce4" stroke-width="1"/><rect x="1.5" y="1.5" width="13" height="6" fill="#3c80e4"/><rect x="1.5" y="10" width="13" height="2.4" fill="#162c58"/></svg>
 <svg class="abs" style="left:81.5px;top:7px" width="18" height="18" viewBox="0 0 22 20"><path d="M11 4 A7 7 0 1 0 17.5 13.5 L13.5 13.5 A3.4 3.4 0 0 1 7.6 12 L18 12 A7 7 0 0 0 11 4 Z M7.6 9.6 A3.4 3.4 0 0 1 14.3 9.6 Z" fill="#34a4f0"/><path d="M2.5 17.5 C-1 9 11 -1 19.5 3.5" stroke="#f0c428" stroke-width="2.2" fill="none"/></svg>
 <div class="abs" style="left:119px;top:4px;color:#fff;font-size:13px;font-weight:bold;line-height:12px">»</div>
 <!-- tray -->
 <svg class="abs" style="left:1701px;top:8px" width="15" height="12" viewBox="0 0 18 14"><rect x="0.5" y="2.5" width="17" height="10" rx="1.5" fill="#9aa6b4" stroke="#c4ccd6"/><path d="M3 5.5 H15 M3 8 H15 M5 10.5 H13" stroke="#6f7f92" stroke-width="1"/></svg>
 <svg class="abs" style="left:1727px;top:4px" width="20" height="22" viewBox="0 0 20 22"><ellipse cx="10" cy="12" rx="6.5" ry="8" fill="#111"/><ellipse cx="10" cy="14.5" rx="4" ry="5" fill="#fff"/><ellipse cx="10" cy="6" rx="4.6" ry="4.8" fill="#111"/><path d="M4 10 Q10 13.5 16 10 L16 12 Q10 15.5 4 12 Z" fill="#e02020"/><ellipse cx="10" cy="8.6" rx="2.6" ry="1.1" fill="#f0a020"/><ellipse cx="6.5" cy="20.3" rx="3" ry="1.4" fill="#f0a020"/><ellipse cx="13.5" cy="20.3" rx="3" ry="1.4" fill="#f0a020"/><circle cx="8.4" cy="5.6" r="1.1" fill="#fff"/><circle cx="11.6" cy="5.6" r="1.1" fill="#fff"/></svg>
 <div class="abs" style="left:1753px;top:6px;width:18px;height:18px;border-radius:3px;background:#b81c14;border:1px solid #7a100c"><svg class="abs" style="left:2px;top:2px" width="12" height="12" viewBox="0 0 12 12"><path d="M2 8 Q4 3 9 3 M4 10 Q6 6 10 6" stroke="#f8e040" stroke-width="1.6" fill="none"/></svg></div>
 <div class="abs" style="left:1780px;top:11px;width:13px;height:9px;border-radius:2px;background:#14d024;border:1px solid #12a01e"></div>
 <svg class="abs" style="left:1800px;top:7px" width="20" height="18" viewBox="0 0 20 18"><path d="M5 12 A3.6 3.6 0 0 1 5 5.2 A5 5 0 0 1 14.6 5.6 A3.3 3.3 0 0 1 14.6 12 Z" fill="#4ab4ee" stroke="#eaf6ff" stroke-width="1"/><circle cx="13" cy="12.5" r="4" fill="#3cb040" stroke="#fff" stroke-width="0.8"/><path d="M11 12.5 L12.6 14 L15 11" stroke="#fff" stroke-width="1.2" fill="none"/></svg>
 <svg class="abs" style="left:1826px;top:7px" width="18" height="17" viewBox="0 0 18 17"><path d="M1 6 H4.5 L9 2 V15 L4.5 11 H1 Z" fill="#f4f6f8" stroke="#8a98a8" stroke-width="0.8"/><path d="M11.5 5.5 Q13.5 8.5 11.5 11.5 M13.8 3.5 Q17 8.5 13.8 13.5" stroke="#eef2f6" stroke-width="1.2" fill="none"/></svg>
 <div class="abs" style="left:1862px;top:8px;color:#fff;font-size:12px;line-height:14px">20:58</div>
 <div class="abs" style="left:1903px;top:0;width:2px;height:30px;background:#6a829c"></div><div class="abs" style="left:1906px;top:1px;width:13px;height:29px;border:1px solid #9db1c5;border-radius:1px;background:linear-gradient(#62768c,#4f6378 50%,#56697e)"></div>
</div>

<!-- context menu -->
<div class="menu" style="left:661px;top:204px;width:278px;height:393px">
<div class="abs" style="left:28px;top:2px;width:2px;height:387px;border-left:1px solid #e2e3e3;border-right:1px solid #fff"></div>
<div class="mi" style="top:3px;left:33px">标记/取消标记<i> </i>分组<i>(<u>M</u>)</i><span class="k" style="left:155px">Ctrl+M</span></div>
<div class="mi" style="top:25px;left:33px">忽略/取消忽略<i> </i>分组<i>(<u>I</u>)</i><span class="k" style="left:155px">Ctrl+D</span></div>
<div class="mi" style="top:47px;left:33px">设置/取消设置<i> </i>时间参考<span class="k" style="left:155px">Ctrl+T</span></div>
<div class="mi" style="top:69px;left:33px">时间平移<i>...</i><span class="k" style="left:155px">Ctrl+Shift+T</span></div>
<div class="mi" style="top:91px;left:33px">分组注释<i>...</i><span class="k" style="left:155px">Ctrl+Alt+C</span></div>
<div class="msep" style="top:116px;width:244px"></div>
<div class="mi" style="top:122px;left:33px">编辑解析的名称</div>
<div class="msep" style="top:147px;width:244px"></div>
<div class="mi" style="top:153px;left:33px">作为过滤器应用</div>
<div class="marr" style="left:257px;top:159px"></div>
<div class="mi" style="top:175px;left:33px">准备过滤器</div>
<div class="marr" style="left:257px;top:181px"></div>
<div class="mi" style="top:197px;left:33px">对话过滤器</div>
<div class="marr" style="left:257px;top:203px"></div>
<div class="mi" style="top:219px;left:33px">对话着色</div>
<div class="marr" style="left:257px;top:225px"></div>
<div class="mi" style="top:241px;left:33px"><i>SCTP</i></div>
<div class="marr" style="left:257px;top:247px"></div>
<div class="hl" style="left:2px;top:263px;width:271px;height:21px"></div>
<div class="mi" style="top:263px;left:33px">追踪流</div>
<div class="marr" style="left:257px;top:269px"></div>
<div class="msep" style="top:288px;width:244px"></div>
<div class="mi" style="top:294px;left:33px">复制</div>
<div class="marr" style="left:257px;top:300px"></div>
<div class="msep" style="top:319px;width:244px"></div>
<div class="mi" style="top:325px;left:33px">协议首选项</div>
<div class="marr" style="left:257px;top:331px"></div>
<div class="mi" style="top:347px;left:33px">解码为<i>(<u>A</u>)...</i></div>
<div class="mi" style="top:369px;left:33px">在新窗口显示分组<i>(<u>W</u>)</i></div>
</div>
<!-- submenu -->
<div class="menu" style="left:932px;top:467px;width:222px;height:94px">
<div class="hl" style="left:2px;top:3px;width:216px;height:21px"></div>
<div class="mi" style="top:3px;left:34px;color:#000"><i>TCP </i>流<span class="k" style="left:72px">Ctrl+Alt+Shift+T</span></div>
<div class="mi" style="top:25px;left:34px;color:#9c9c9c"><i>UDP </i>流<span class="k" style="left:72px">Ctrl+Alt+Shift+U</span></div>
<div class="mi" style="top:47px;left:34px;color:#000"><i>SSL </i>流<span class="k" style="left:72px">Ctrl+Alt+Shift+S</span></div>
<div class="mi" style="top:69px;left:34px;color:#9c9c9c"><i>HTTP </i>流<span class="k" style="left:72px">Ctrl+Alt+Shift+H</span></div>
</div>

</div>
</body>
</html>
